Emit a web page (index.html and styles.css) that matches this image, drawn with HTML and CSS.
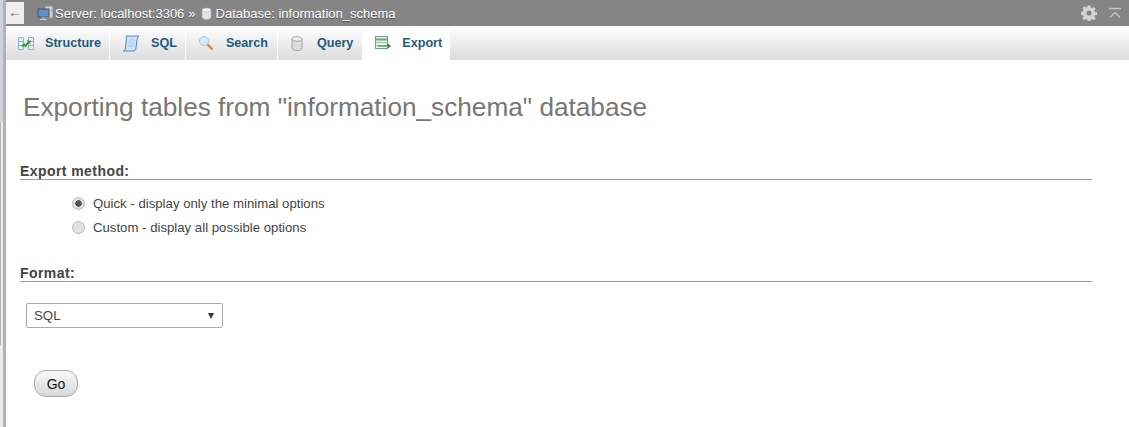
FILE: index.html
```html
<!DOCTYPE html>
<html>
	<head>
		<meta charset="UTF-8">
		<title>Export</title>
		<link rel="stylesheet" href="styles.css">
	</head>
	<body>
		<div class="navstrip">
			<div class="navtop"></div>
			<div class="navscroll"></div>
		</div>
		<div class="page">
			<div class="serverinfo">
				<span class="back">←</span>
				<svg class="crumbicon" width="18" height="16" viewBox="0 0 18 16">
					<rect x="8" y="1" width="8" height="12" fill="#cfd3d6" stroke="#8a8f94"/>
					<rect x="1" y="4" width="11" height="8" fill="#5f8fc4" stroke="#46586e"/>
					<rect x="5" y="12" width="3" height="2" fill="#9aa0a6"/>
					<rect x="3" y="14" width="7" height="1" fill="#c8ccd0"/>
					<rect x="14" y="5" width="1" height="1" fill="#3fae3f"/>
				</svg>
				<span class="crumb">Server: localhost:3306</span>
				<span class="sep">»</span>
				<svg class="dbicon" width="11" height="13" viewBox="0 0 11 13">
					<path d="M1 3v7c0 1.500 2 2.500 4.500 2.500S10 11.500 10 10V3z" fill="#e4e4e4" stroke="#aaa" stroke-width=".6"/>
					<ellipse cx="5.500" cy="3" rx="4.500" ry="2" fill="#f6f6f6" stroke="#aaa" stroke-width=".6"/>
				</svg>
				<span class="crumb">Database: information_schema</span>
				<span class="spacer"></span>
				<svg class="gear" width="16" height="16" viewBox="0 0 16 16">
					<path d="M6.700 0.500h2.600l.4 2.100 1.300.6 1.800-1.200 1.800 1.800-1.200 1.800.6 1.300 2.100.4v2.600l-2.100.4-.6 1.300 1.200 1.800-1.800 1.800-1.800-1.200-1.300.6-.4 2.100H6.700l-.4-2.100-1.300-.6-1.800 1.200-1.800-1.800 1.200-1.800-.6-1.300-2.100-.4V6.700l2.100-.4.600-1.300-1.200-1.800 1.800-1.800 1.800 1.200 1.300-.6z" fill="#d4d4d4"/>
					<circle cx="8" cy="8" r="2.600" fill="#858585"/>
				</svg>
				<svg class="collapse" width="14" height="12" viewBox="0 0 14 12">
					<path d="M1 1.500h12" stroke="#c4c4c4" stroke-width="1.400" fill="none"/>
					<path d="M2 10.500l5-5 5 5" stroke="#c4c4c4" stroke-width="1.400" fill="none"/>
				</svg>
			</div>
			<ul class="tabs">
				<li class="tab">
					<svg width="16" height="17" viewBox="0 0 16 17">
						<path d="M.5 2.500h5v12h-5zM10.500 2.500h5v12h-5z" fill="#e6f0f8" stroke="#8db4d6"/>
						<path d="M.5 6.500h5M.5 10.500h5M10.500 6.500h5M10.500 10.500h5" stroke="#8db4d6"/>
						<path d="M4 11.500l2-2 1.500 1.500 3-4" stroke="#3f9a2e" stroke-width="2" fill="none"/>
						<path d="M8.500 5.500h4v4z" fill="#3f9a2e"/>
					</svg>
					<span>Structure</span>
				</li>
				<li class="tab">
					<svg width="18" height="17" viewBox="0 0 18 17">
						<path d="M4 1h13c-1.200.8-1.800 2-2 3.500L14 13c-.3 2-1.300 3-3 3H1.500c1.200-.5 1.800-1.500 2-3l.8-8.500C4.500 3 4.500 2 4 1z" fill="#cfe2f5" stroke="#4f86c4"/>
						<path d="M7 5h6M6.500 8h6M6 11h6" stroke="#a9c8e6"/>
					</svg>
					<span>SQL</span>
				</li>
				<li class="tab roomy">
					<svg width="17" height="16" viewBox="0 0 17 16">
						<circle cx="6" cy="6" r="4.500" fill="#d5e8f7" stroke="#a9c6de"/>
						<path d="M9.500 9.500l5 5" stroke="#c98a45" stroke-width="2.400"/>
					</svg>
					<span>Search</span>
				</li>
				<li class="tab roomy">
					<svg width="16" height="15" viewBox="0 0 16 15">
						<path d="M2 3v9c0 1.500 2.200 2.500 5 2.500s5-1 5-2.500V3z" fill="#dcdcdc" stroke="#a0a0a0"/>
						<ellipse cx="7" cy="3" rx="5" ry="2.200" fill="#f2f2f2" stroke="#a0a0a0"/>
					</svg>
					<span>Query</span>
				</li>
				<li class="tab active">
					<svg width="16" height="15" viewBox="0 0 16 15">
						<rect x=".5" y=".5" width="12" height="12" fill="#eef4ea" stroke="#6e93c4"/>
						<path d="M1 3.500h11" stroke="#6fae5a" stroke-width="2"/>
						<path d="M1 6.500h11M1 9.500h11" stroke="#9fbfa0"/>
						<path d="M3 9.500h10V7.500l3 2.500-3 2.500v-2H3z" fill="#2e8b2e"/>
					</svg>
					<span>Export</span>
				</li>
			</ul>
			<div class="content">
				<h2>Exporting tables from "information_schema" database</h2>
				<div class="section first">
					<h3>Export method:</h3>
					<ul class="options">
						<li><input type="radio" name="method" checked><label>Quick - display only the minimal options</label></li>
						<li><input type="radio" name="method"><label>Custom - display all possible options</label></li>
					</ul>
				</div>
				<div class="section">
					<h3>Format:</h3>
					<div class="select">
						<span>SQL</span>
						<span class="arrow"></span>
					</div>
				</div>
				<button class="go" type="button">Go</button>
			</div>
		</div>
	</body>
</html>
```

FILE: styles.css
```css
* {
	margin: 0;
	padding: 0;
	box-sizing: border-box;
}
html, body {
	height: 100%;
	overflow: hidden;
}
body {
	display: flex;
	background-color: white;
	font-family: "Liberation Sans", Arial, sans-serif;
	font-size: 13px;
	color: #444;
}
.navstrip {
	display: flex;
	flex-direction: column;
	flex: none;
	width: 3px;
	background-color: #ececec;
}
.navtop {
	height: 122px;
	background-color: #cdd3d8;
}
.navscroll {
	width: 1px;
	height: 223px;
	background-color: #b5b5b5;
}
.page {
	flex: 1;
	border-left: 3px solid #b3b3b3;
}
.serverinfo {
	display: flex;
	align-items: center;
	height: 26px;
	padding-right: 7px;
	background-color: #858585;
	color: white;
	font-size: 13px;
	text-shadow: 0 1px 0 #555;
}
.back {
	display: block;
	width: 18px;
	height: 22px;
	margin-right: 13px;
	background-color: #eee;
	color: #666;
	text-align: center;
	line-height: 20px;
	font-size: 14px;
	text-shadow: none;
}
.sep {
	margin: 0 4px;
}
.dbicon {
	margin: 0 4px 0 1px;
}
.spacer {
	flex: 1;
}
.gear {
	margin-right: 11px;
}
.tabs {
	display: flex;
	list-style: none;
	height: 34px;
	background: linear-gradient(#fff, #dcdcdc);
}
.tab {
	display: flex;
	align-items: center;
	gap: 11px;
	padding: 0 8px 0 12px;
	border-right: 1px solid #fff;
	color: #235a81;
	font-size: 12.600px;
	font-weight: bold;
}
.tab.roomy {
	padding-right: 9px;
}
.tab.active {
	background: white;
	border-right: none;
}
.content {
	padding: 33px 37px 0 14px;
}
h2 {
	margin-left: 3px;
	font-size: 26.200px;
	font-weight: normal;
	line-height: 28px;
	color: #777;
}
.section {
	margin-top: 27px;
}
.section.first {
	margin-top: 43px;
}
h3 {
	height: 16px;
	border-bottom: 1px solid #999;
	font-size: 14px;
	line-height: 14px;
	letter-spacing: .43px;
	color: #444;
}
.options {
	list-style: none;
	margin: 11px 0 0 52px;
}
.options li {
	display: flex;
	align-items: center;
	height: 24px;
	font-size: 13.200px;
}
.options input {
	appearance: none;
	width: 13px;
	height: 13px;
	margin-right: 8px;
	border: 1px solid #bbb;
	border-radius: 50%;
	background-color: #e2e2e2;
}
.options input:checked {
	background: radial-gradient(circle, #555 0 3px, #e2e2e2 3.500px);
}
.select {
	display: flex;
	align-items: center;
	justify-content: space-between;
	width: 197px;
	height: 25px;
	margin: 21px 0 0 6px;
	padding: 0 8px 0 7px;
	border: 1px solid #aaa;
	border-radius: 2px;
	font-size: 13.300px;
	color: #444;
}
.arrow {
	border-left: 3px solid transparent;
	border-right: 3px solid transparent;
	border-top: 6px solid #333;
}
.go {
	display: block;
	width: 44px;
	height: 27px;
	margin: 42px 0 0 14px;
	border: 1px solid #aaa;
	border-radius: 12px;
	background: linear-gradient(#f8f8f8, #d8d8d8);
	font-family: inherit;
	font-size: 14px;
	color: #111;
}
```
